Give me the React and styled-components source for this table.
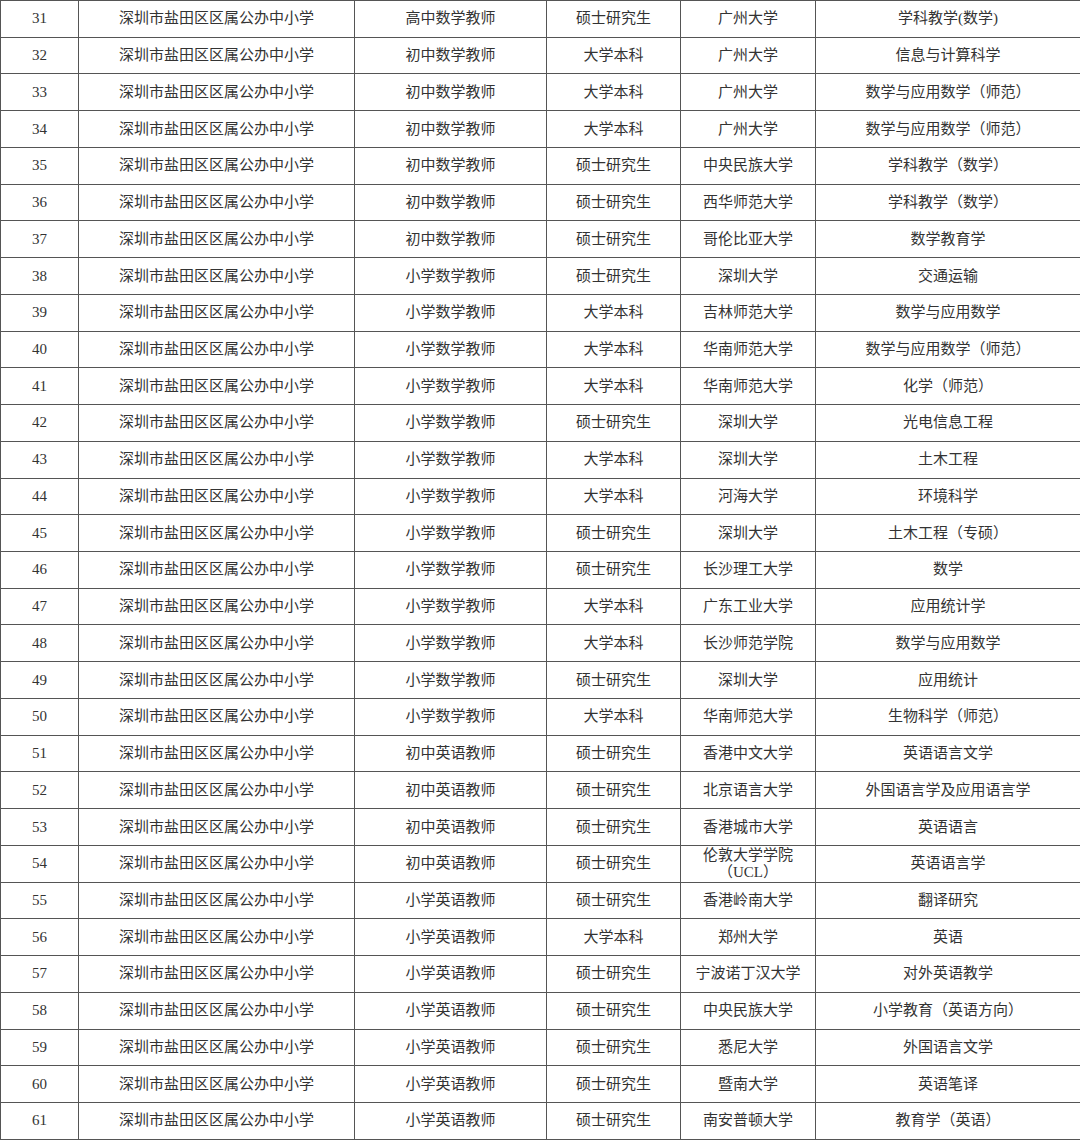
import React from 'react';
import styled, { createGlobalStyle } from 'styled-components';

const GlobalStyle = createGlobalStyle`
    html, body {
        margin: 0;
        padding: 0;
        background: #ffffff;
    }
`;

const Table = styled.table`
    width: 1080px;
    border-collapse: collapse;
    table-layout: fixed;
    font-family: "Liberation Serif", "Noto Sans CJK SC", serif;
    font-size: 15px;
    color: #333333;
`;

const Row = styled.tr`
    height: 36.74px;
`;

const Cell = styled.td`
    border: 1px solid #555555;
    padding: 0;
    text-align: center;
    vertical-align: middle;
    line-height: 17px;
    letter-spacing: 0;
    white-space: pre-line;
`;

const columns = [78, 276, 192, 134, 135, 265];

const rows = [
    [31, '高中数学教师', '硕士研究生', '广州大学', '学科教学(数学)'],
    [32, '初中数学教师', '大学本科', '广州大学', '信息与计算科学'],
    [33, '初中数学教师', '大学本科', '广州大学', '数学与应用数学（师范）'],
    [34, '初中数学教师', '大学本科', '广州大学', '数学与应用数学（师范）'],
    [35, '初中数学教师', '硕士研究生', '中央民族大学', '学科教学（数学）'],
    [36, '初中数学教师', '硕士研究生', '西华师范大学', '学科教学（数学）'],
    [37, '初中数学教师', '硕士研究生', '哥伦比亚大学', '数学教育学'],
    [38, '小学数学教师', '硕士研究生', '深圳大学', '交通运输'],
    [39, '小学数学教师', '大学本科', '吉林师范大学', '数学与应用数学'],
    [40, '小学数学教师', '大学本科', '华南师范大学', '数学与应用数学（师范）'],
    [41, '小学数学教师', '大学本科', '华南师范大学', '化学（师范）'],
    [42, '小学数学教师', '硕士研究生', '深圳大学', '光电信息工程'],
    [43, '小学数学教师', '大学本科', '深圳大学', '土木工程'],
    [44, '小学数学教师', '大学本科', '河海大学', '环境科学'],
    [45, '小学数学教师', '硕士研究生', '深圳大学', '土木工程（专硕）'],
    [46, '小学数学教师', '硕士研究生', '长沙理工大学', '数学'],
    [47, '小学数学教师', '大学本科', '广东工业大学', '应用统计学'],
    [48, '小学数学教师', '大学本科', '长沙师范学院', '数学与应用数学'],
    [49, '小学数学教师', '硕士研究生', '深圳大学', '应用统计'],
    [50, '小学数学教师', '大学本科', '华南师范大学', '生物科学（师范）'],
    [51, '初中英语教师', '硕士研究生', '香港中文大学', '英语语言文学'],
    [52, '初中英语教师', '硕士研究生', '北京语言大学', '外国语言学及应用语言学'],
    [53, '初中英语教师', '硕士研究生', '香港城市大学', '英语语言'],
    [54, '初中英语教师', '硕士研究生', '伦敦大学学院\n（UCL）', '英语语言学'],
    [55, '小学英语教师', '硕士研究生', '香港岭南大学', '翻译研究'],
    [56, '小学英语教师', '大学本科', '郑州大学', '英语'],
    [57, '小学英语教师', '硕士研究生', '宁波诺丁汉大学', '对外英语教学'],
    [58, '小学英语教师', '硕士研究生', '中央民族大学', '小学教育（英语方向）'],
    [59, '小学英语教师', '硕士研究生', '悉尼大学', '外国语言文学'],
    [60, '小学英语教师', '硕士研究生', '暨南大学', '英语笔译'],
    [61, '小学英语教师', '硕士研究生', '南安普顿大学', '教育学（英语）'],
];

const App = () => (
    <>
        <GlobalStyle />
        <Table>
            <colgroup>
                {columns.map((w, i) => (
                    <col key={i} style={{ width: w }} />
                ))}
            </colgroup>
            <tbody>
                {rows.map(([no, post, degree, school, major]) => (
                    <Row key={no}>
                        <Cell>{no}</Cell>
                        <Cell>深圳市盐田区区属公办中小学</Cell>
                        <Cell>{post}</Cell>
                        <Cell>{degree}</Cell>
                        <Cell>{school}</Cell>
                        <Cell>{major}</Cell>
                    </Row>
                ))}
            </tbody>
        </Table>
    </>
);

export default App;
